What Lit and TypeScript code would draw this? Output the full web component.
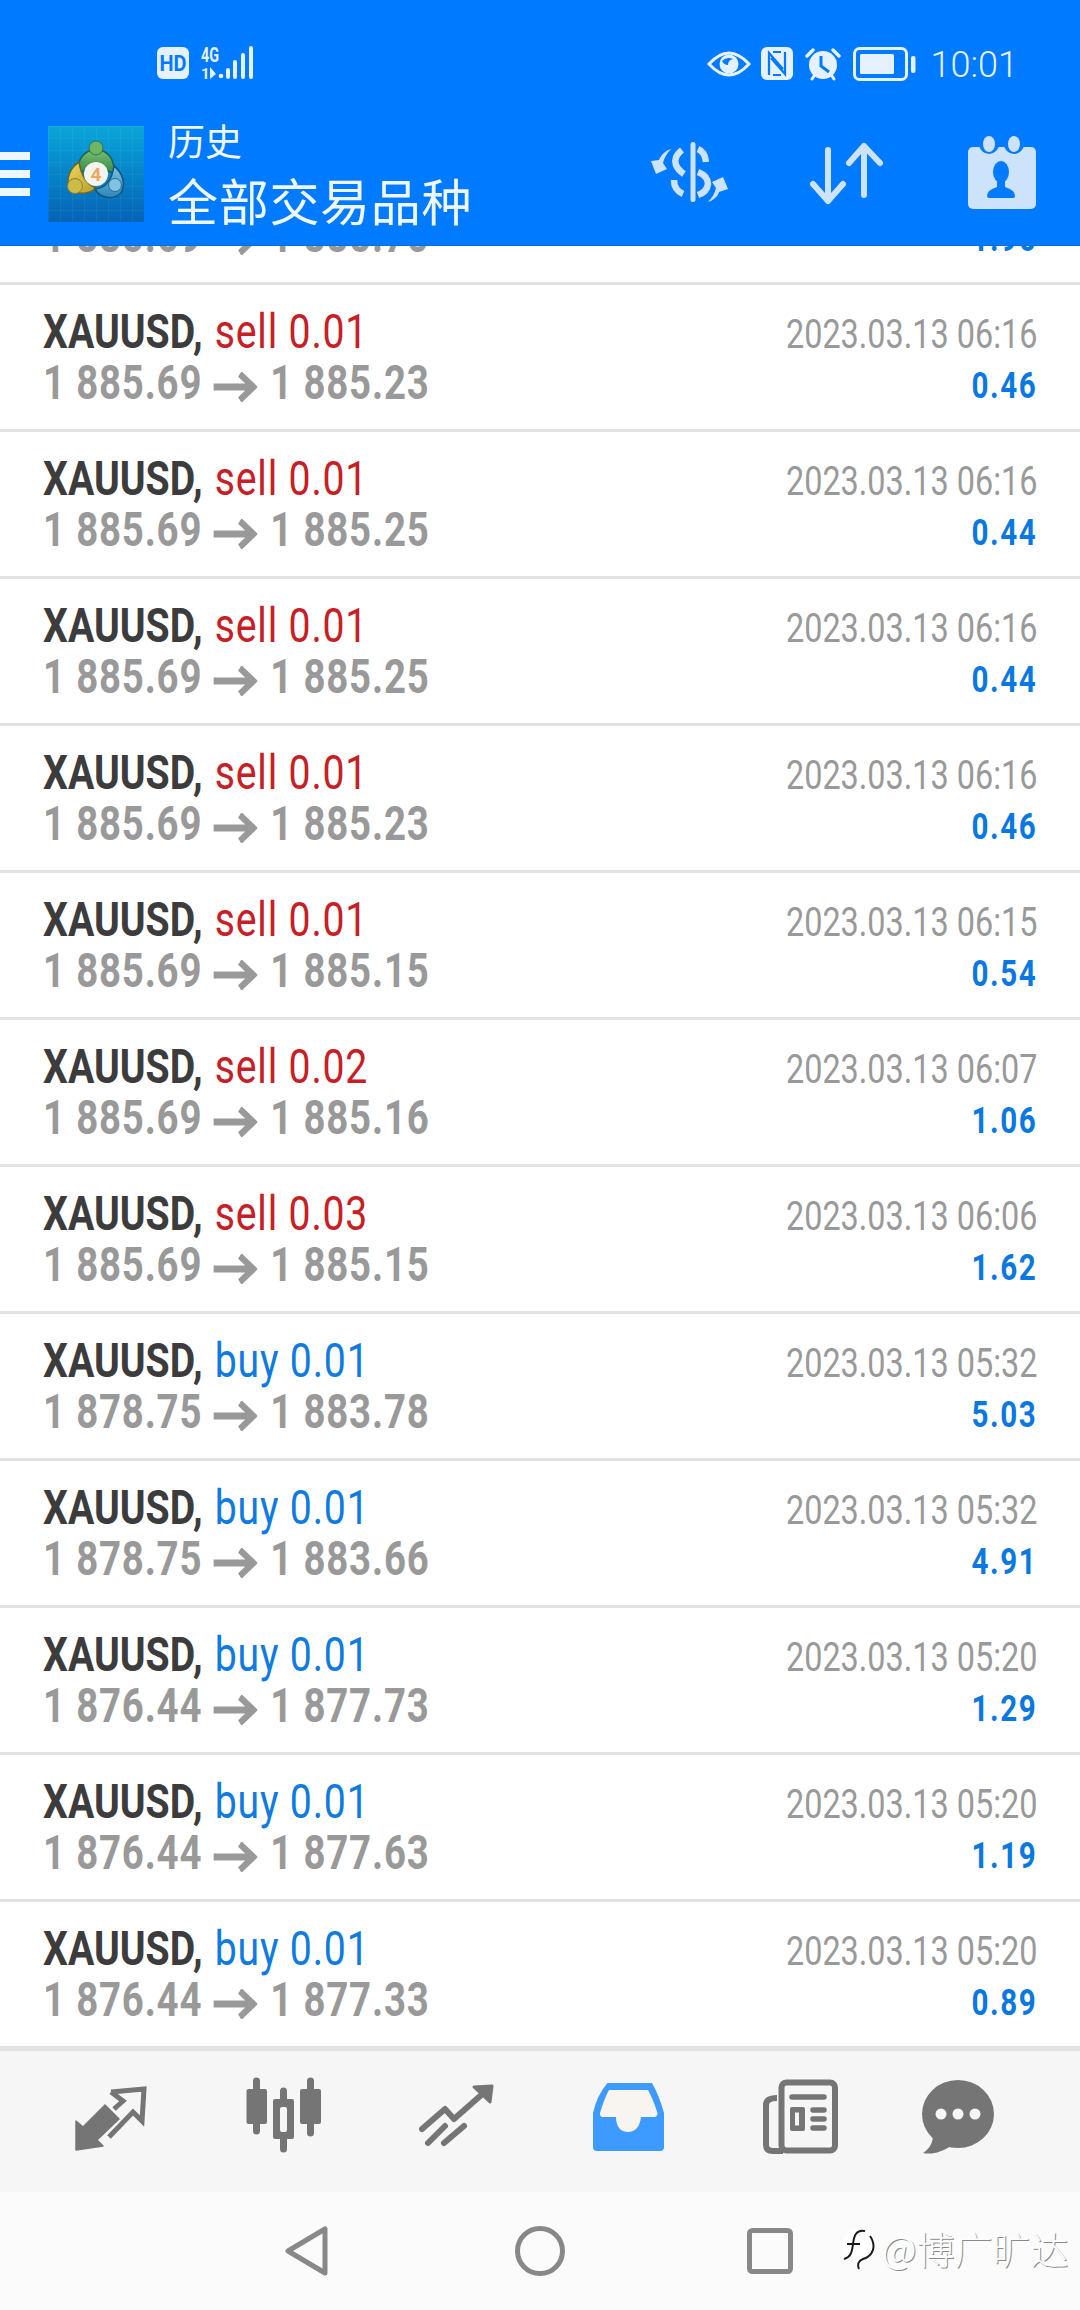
import { LitElement, html, css } from 'lit';
import { customElement } from 'lit/decorators.js';

interface Trade {
  side: 'sell' | 'buy';
  lots: string;
  from: string;
  to: string;
  time: string;
  profit: string;
}

const trades: Trade[] = [
  { side: 'sell', lots: '0.01', from: '1 885.69', to: '1 885.70', time: '2023.03.13 06:16', profit: '1.96' },
  { side: 'sell', lots: '0.01', from: '1 885.69', to: '1 885.23', time: '2023.03.13 06:16', profit: '0.46' },
  { side: 'sell', lots: '0.01', from: '1 885.69', to: '1 885.25', time: '2023.03.13 06:16', profit: '0.44' },
  { side: 'sell', lots: '0.01', from: '1 885.69', to: '1 885.25', time: '2023.03.13 06:16', profit: '0.44' },
  { side: 'sell', lots: '0.01', from: '1 885.69', to: '1 885.23', time: '2023.03.13 06:16', profit: '0.46' },
  { side: 'sell', lots: '0.01', from: '1 885.69', to: '1 885.15', time: '2023.03.13 06:15', profit: '0.54' },
  { side: 'sell', lots: '0.02', from: '1 885.69', to: '1 885.16', time: '2023.03.13 06:07', profit: '1.06' },
  { side: 'sell', lots: '0.03', from: '1 885.69', to: '1 885.15', time: '2023.03.13 06:06', profit: '1.62' },
  { side: 'buy', lots: '0.01', from: '1 878.75', to: '1 883.78', time: '2023.03.13 05:32', profit: '5.03' },
  { side: 'buy', lots: '0.01', from: '1 878.75', to: '1 883.66', time: '2023.03.13 05:32', profit: '4.91' },
  { side: 'buy', lots: '0.01', from: '1 876.44', to: '1 877.73', time: '2023.03.13 05:20', profit: '1.29' },
  { side: 'buy', lots: '0.01', from: '1 876.44', to: '1 877.63', time: '2023.03.13 05:20', profit: '1.19' },
  { side: 'buy', lots: '0.01', from: '1 876.44', to: '1 877.33', time: '2023.03.13 05:20', profit: '0.89' },
];

const ink = '#e6f1ff';
const blue = '#007aff';
const tool = '#cde3fb';
const gray = '#757575';

const hdIcon = html`<svg width="32" height="32" viewBox="0 0 32 32">
  <rect x="0" y="0" width="32" height="32" rx="6" fill=${ink}></rect>
  <text x="16" y="24" text-anchor="middle" font-family="Roboto" font-weight="700" font-size="22" textLength="27" lengthAdjust="spacingAndGlyphs" fill=${blue}>HD</text>
</svg>`;

const signalIcon = html`<svg width="54" height="36" viewBox="0 0 54 36">
  <text x="0" y="17" font-family="Roboto" font-weight="700" font-size="21" textLength="18" lengthAdjust="spacingAndGlyphs" fill=${ink}>4G</text>
  <text x="0" y="34" font-family="Roboto" font-weight="700" font-size="15" fill=${ink}>1</text>
  <path d="M9 22 L9 34 L15 29 Z" fill=${ink}></path>
  <circle cx="20" cy="31" r="2.3" fill=${ink}></circle>
  <rect x="25" y="23" width="4" height="11" rx="2" fill=${ink}></rect>
  <rect x="32" y="15" width="4" height="19" rx="2" fill=${ink}></rect>
  <rect x="40" y="8" width="4" height="26" rx="2" fill=${ink}></rect>
  <rect x="48" y="1" width="4" height="33" rx="2" fill=${ink}></rect>
</svg>`;

const eyeIcon = html`<svg class="eye" width="44" height="28" viewBox="0 0 44 28">
  <path d="M2 14 Q22 -8 42 14 Q22 36 2 14 Z" fill="none" stroke=${ink} stroke-width="3"></path>
  <circle cx="22" cy="14" r="9.5" fill=${ink}></circle>
  <path d="M15 11 Q20 6 26 9 Q21 10 21 15 Q17 15 15 11 Z" fill=${blue}></path>
</svg>`;

const nfcIcon = html`<svg width="32" height="33" viewBox="0 0 32 33">
  <rect width="32" height="33" rx="6" fill=${ink}></rect>
  <path d="M8 28 V6 L22 22 M12 5 H20 M24 5 V27 L10 11 M12 28 H20" fill="none" stroke=${blue} stroke-width="2.2"></path>
</svg>`;

const alarmIcon = html`<svg width="36" height="34" viewBox="0 0 36 34">
  <circle cx="18" cy="18" r="14" fill=${ink}></circle>
  <path d="M2 9 L8 3 M34 9 L28 3" stroke=${ink} stroke-width="3.4" stroke-linecap="round"></path>
  <path d="M7 32 L9 29 M29 32 L27 29" stroke=${ink} stroke-width="3" stroke-linecap="round"></path>
  <path d="M16 9 V19 L24 25" fill="none" stroke=${blue} stroke-width="3"></path>
</svg>`;

const batteryIcon = html`<svg width="63" height="34" viewBox="0 0 63 34">
  <rect x="1.5" y="1.5" width="52" height="31" rx="5" fill="none" stroke=${ink} stroke-width="3"></rect>
  <rect x="7" y="7" width="34" height="20" rx="1.5" fill=${ink}></rect>
  <rect x="58" y="9" width="4.5" height="17" rx="2" fill=${ink}></rect>
</svg>`;

const logo = html`<svg class="logo" width="96" height="96" viewBox="0 0 96 96">
  <defs>
    <linearGradient id="sky" x1="0" y1="0" x2="0" y2="1">
      <stop offset="0" stop-color="#0aa6d8"></stop>
      <stop offset="0.55" stop-color="#0580c8"></stop>
      <stop offset="1" stop-color="#0662b4"></stop>
    </linearGradient>
    <pattern id="mesh" width="12" height="12" patternUnits="userSpaceOnUse">
      <path d="M12 0 H0 V12" fill="none" stroke="#ffffff" stroke-opacity="0.09"></path>
    </pattern>
    <linearGradient id="lobeG" x1="0" y1="0" x2="0" y2="1">
      <stop offset="0" stop-color="#7cc06c"></stop>
      <stop offset="1" stop-color="#2f8650"></stop>
    </linearGradient>
    <linearGradient id="lobeY" x1="0" y1="0" x2="1" y2="1">
      <stop offset="0" stop-color="#efd75c"></stop>
      <stop offset="1" stop-color="#b79c2c"></stop>
    </linearGradient>
    <linearGradient id="lobeB" x1="0" y1="0" x2="0" y2="1">
      <stop offset="0" stop-color="#7cc3e6"></stop>
      <stop offset="1" stop-color="#2e86b8"></stop>
    </linearGradient>
  </defs>
  <rect width="96" height="96" fill="url(#sky)"></rect>
  <rect width="96" height="96" fill="url(#mesh)"></rect>
  <path d="M48 24 C60 24 67 33 66 48 C58 42 38 42 30 48 C29 33 36 24 48 24 Z" fill="url(#lobeG)" stroke="#1d5f5a" stroke-width="1.6"></path>
  <circle cx="48" cy="22" r="7" fill="#6fb565" stroke="#2c7550" stroke-width="1"></circle>
  <path d="M31 36 C22 42 18 52 21 62 C30 70 42 68 48 62 C38 58 33 48 31 36 Z" fill="url(#lobeY)" stroke="#5f6b30" stroke-width="1.6"></path>
  <circle cx="27" cy="60" r="7.500" fill="#cdbb45" stroke="#8a8232" stroke-width="1"></circle>
  <path d="M66 40 C75 47 78 58 73 67 C64 75 52 72 47 63 C58 62 64 54 66 40 Z" fill="url(#lobeB)" stroke="#14587e" stroke-width="1.6"></path>
  <circle cx="67" cy="59" r="6.500" fill="#80c2e0" stroke="#256f98" stroke-width="1"></circle>
  <circle cx="48" cy="48" r="12" fill="#f4f4ee"></circle>
  <text x="48" y="55" text-anchor="middle" font-family="Roboto" font-weight="700" font-size="19" fill="#efa95f">4</text>
</svg>`;

const dollarIcon = html`<svg width="90" height="80" viewBox="0 4 90 80">
  <rect x="50.5" y="12" width="5" height="60" rx="2.5" fill=${tool}></rect>
  <g fill="none" stroke=${tool} stroke-width="6.500">
    <path d="M42 20 Q33 27 36 35 Q38 40 44 44"></path>
    <path d="M58 19 Q65 22 66 32"></path>
    <path d="M34 50 Q34 60 43 64"></path>
    <path d="M58 42 Q68 46 68 54 Q67 62 58 65"></path>
  </g>
  <path d="M31 19 C25 21 21 25 19 30 L11 31 L16 44 L27 39 L23 33 C24 28 27 23 31 19 Z" fill=${tool}></path>
  <path d="M68 72 C74 70 78 66 79 62 L88 59 L83 47 L72 52 L76 58 C75 63 72 68 68 72 Z" fill=${tool}></path>
</svg>`;

const sortIcon = html`<svg width="80" height="70" viewBox="0 -1 80 70">
  <g fill="none" stroke=${tool} stroke-width="6" stroke-linecap="round" stroke-linejoin="round">
    <path d="M22 10 V60 M7 44 L22 61 L37 44"></path>
    <path d="M58 6 V55 M43 23 L58 6 L74 23"></path>
  </g>
</svg>`;

const calendarIcon = html`<svg width="80" height="80" viewBox="0 0 80 80">
  <rect x="6" y="13" width="68" height="62" rx="5" fill=${tool}></rect>
  <circle cx="27" cy="10" r="10" fill=${blue}></circle>
  <circle cx="52" cy="10" r="10" fill=${blue}></circle>
  <ellipse cx="27" cy="10" rx="6" ry="8" fill=${tool}></ellipse>
  <ellipse cx="52" cy="10" rx="6" ry="8" fill=${tool}></ellipse>
  <ellipse cx="39" cy="38" rx="8" ry="11" fill=${blue}></ellipse>
  <path d="M25 62 Q25 56 35 53 H43 Q53 56 53 62 Q53 64 51 64 H27 Q25 64 25 62 Z" fill=${blue}></path>
  <rect x="35" y="44" width="8" height="11" fill=${blue}></rect>
</svg>`;

const tradeIcon = html`<svg width="90" height="90" viewBox="-5 -8 90 90">
  <path d="M4 44 L11 50 L33 28 L47 42 L25 63 L31 69 L4 73 Z" fill=${gray} stroke=${gray} stroke-width="1.5" stroke-linejoin="round"></path>
  <path d="M39 15 L72 12 L70 44 L61 35 L37 60 M39 15 L51 24 L42 32" fill="none" stroke=${gray} stroke-width="5"></path>
</svg>`;

const candleIcon = html`<svg width="90" height="90" viewBox="0 0 90 90">
  <g stroke=${gray} stroke-width="7" stroke-linecap="round">
    <path d="M17.5 12 V62 M44.5 22 V80 M71.5 12 V64"></path>
  </g>
  <rect x="7.5" y="20" width="20.5" height="35" rx="2" fill=${gray}></rect>
  <rect x="34" y="30" width="21" height="40" rx="2" fill=${gray}></rect>
  <rect x="61" y="20" width="21" height="35" rx="2" fill=${gray}></rect>
  <rect x="41" y="38" width="7" height="25" rx="2" fill="#f6f6f6"></rect>
</svg>`;

const chartIcon = html`<svg width="90" height="90" viewBox="0 0 90 90">
  <g fill="none" stroke=${gray} stroke-width="6" stroke-linecap="round" stroke-linejoin="round">
    <path d="M11 60 L34 40 L43 50 L76 21"></path>
    <path d="M34 57 L17 74 M53 57 L33 74"></path>
  </g>
  <path d="M63 18 L81 17 L79 33 Z" fill=${gray} stroke=${gray} stroke-width="3" stroke-linejoin="round"></path>
</svg>`;

const trayIcon = html`<svg width="90" height="90" viewBox="0 0 90 90">
  <path d="M24.5 14 H69 Q76 26 81 44 V78 Q81 82 77 82 H14 Q10 82 10 78 V44 Q14 26 24.5 14 Z" fill="#3d9bff"></path>
  <path d="M26 21 H65 Q70 30 74.5 44 Q74.5 48 71 48 H58 C57 58 52 63 45 63 C38 63 33 58 33 48 H20 Q16.500 48 17 44 Q21 30 26 21 Z" fill="#f8f5f0"></path>
</svg>`;

const newsIcon = html`<svg width="90" height="90" viewBox="0 0 90 90">
  <rect x="26.500" y="13.500" width="53.500" height="68" rx="5" fill="none" stroke=${gray} stroke-width="6"></rect>
  <path d="M22 29 Q11 29 11 36 V76 Q11 82 18 82 H28" fill="none" stroke=${gray} stroke-width="6"></path>
  <g stroke=${gray} stroke-width="5.500" stroke-linecap="round">
    <path d="M37 28 H69 M58 41 H69 M58 50 H69 M58 59 H69"></path>
  </g>
  <rect x="35" y="38" width="15" height="24" rx="2" fill=${gray}></rect>
  <rect x="40" y="43.500" width="4" height="13" fill="#f6f6f6"></rect>
</svg>`;

const chatIcon = html`<svg class="chat" width="90" height="90" viewBox="0 0 90 90">
  <ellipse cx="31" cy="45" rx="36" ry="34" fill=${gray}></ellipse>
  <path d="M6 62 C7 74 2 80 -4 84 C6 86 14 83 24 77 Z" fill=${gray}></path>
  <circle cx="14" cy="45" r="5.500" fill="#f6f6f6"></circle>
  <circle cx="31" cy="45" r="5.500" fill="#f6f6f6"></circle>
  <circle cx="48" cy="45" r="5.500" fill="#f6f6f6"></circle>
</svg>`;

const backIcon = html`<svg width="44" height="50" viewBox="0 0 44 50">
  <path d="M40 3 V47 L3 25 Z" fill="none" stroke="#888888" stroke-width="5" stroke-linejoin="round"></path>
</svg>`;

const homeIcon = html`<svg width="50" height="50" viewBox="0 0 50 50">
  <circle cx="25" cy="25" r="22.500" fill="none" stroke="#888888" stroke-width="5"></circle>
</svg>`;

const recentIcon = html`<svg width="46" height="46" viewBox="0 0 46 46">
  <rect x="2.500" y="2.500" width="41" height="41" rx="3" fill="none" stroke="#888888" stroke-width="5"></rect>
</svg>`;

const markIcon = html`<svg width="38" height="44" viewBox="0 0 38 44">
  <circle cx="18" cy="19" r="17" fill="#ffffff"></circle>
  <path d="M24 5 C15 3 13 10 12 18 C11 26 10 31 3 33 M6 18 H19 M29 10 C36 20 32 30 22 33 C17 35 16 39 18 43" fill="none" stroke="#1a1a1a" stroke-width="2"></path>
</svg>`;

@customElement('app-root')
export class AppRoot extends LitElement {
  static styles = css`
    :host {
      display: flex;
      flex-direction: column;
      width: 1080px;
      height: 2310px;
      overflow: hidden;
      background: #ffffff;
      font-family: Roboto, 'Noto Sans CJK SC', sans-serif;
    }

    .head {
      flex: none;
      height: 245px;
      background: #007aff;
      border-bottom: 1px solid #0a6fd6;
    }

    .status {
      display: flex;
      align-items: flex-start;
      height: 84px;
      box-sizing: border-box;
      padding: 45px 62px 0 157px;
    }

    .status .left,
    .status .right {
      display: flex;
      align-items: center;
    }

    .status .left {
      gap: 12px;
    }

    .status .right {
      margin-left: auto;
      gap: 12px;
    }

    .eye {
      margin-right: -2px;
    }

    .clock {
      margin-left: 3px;
      padding-top: 3px;
      font-size: 36px;
      font-weight: 300;
      line-height: 34px;
      color: #e6f1ff;
    }

    .bar {
      display: flex;
      align-items: center;
      height: 144px;
      margin-top: 18px;
      padding-right: 38px;
    }

    .burger {
      display: flex;
      flex-direction: column;
      gap: 10px;
      width: 30px;
      margin-right: 18px;
    }

    .burger i {
      display: block;
      height: 8px;
      background: #eef6ff;
    }

    .titles {
      flex: 1;
      margin-left: 24px;
      padding-bottom: 3px;
      color: #eef6ff;
      font-family: 'Noto Sans CJK SC', sans-serif;
    }

    .titles .small {
      margin-bottom: 3px;
      font-size: 37px;
      line-height: 50px;
    }

    .titles .big {
      font-size: 50px;
      letter-spacing: 0.7px;
      line-height: 62px;
    }

    .tools {
      display: flex;
      align-items: center;
      gap: 76px;
    }

    .list {
      flex: 1;
      min-height: 0;
      overflow: hidden;
    }

    .rows {
      margin-top: -108px;
    }

    .row {
      display: flex;
      justify-content: space-between;
      height: 147px;
      box-sizing: border-box;
      padding: 21px 43px 0 43px;
      border-bottom: 3px solid #e3e3e3;
    }

    .col {
      display: flex;
      flex-direction: column;
    }

    .col.r {
      align-items: flex-end;
      padding-top: 3px;
    }

    .cond {
      display: block;
      white-space: nowrap;
      line-height: 51px;
      transform: scaleX(0.8);
      transform-origin: left center;
    }

    .col.r .cond {
      transform-origin: right center;
    }

    .title {
      font-size: 49px;
    }

    .sym {
      margin-right: 3px;
      font-weight: 700;
      color: #3c3c3c;
    }

    .sell {
      letter-spacing: 1px;
      color: #c62026;
    }

    .buy {
      letter-spacing: 1px;
      color: #0f7ae0;
    }

    .prices {
      font-size: 48px;
      font-weight: 700;
      letter-spacing: 1px;
      color: #999999;
    }

    .prices svg {
      margin: 0 16px 0 14px;
      vertical-align: -3px;
    }

    .cond.time {
      font-size: 40px;
      color: #999999;
      transform: scaleX(0.81);
    }

    .profit {
      font-size: 37px;
      font-weight: 700;
      letter-spacing: 2px;
      color: #0a78e0;
    }

    .tabs {
      flex: none;
      display: flex;
      align-items: center;
      height: 143px;
      box-sizing: border-box;
      padding: 0 0 16px 26px;
      background: #f6f6f6;
      border-top: 2px solid #e3e3e3;
    }

    .tabs .tab {
      display: flex;
      justify-content: center;
      width: 172px;
    }

    .tabs svg {
      overflow: visible;
    }

    .nav {
      position: relative;
      flex: none;
      display: flex;
      align-items: center;
      height: 118px;
      padding-left: 285px;
      background: #fbfbfb;
    }

    .nav .home {
      margin: 0 182px 0 186px;
      display: flex;
    }

    .nav .back,
    .nav .recent {
      display: flex;
    }

    .mark {
      position: absolute;
      left: 841px;
      top: 34px;
      display: flex;
      align-items: center;
      gap: 3px;
      font-family: 'Noto Sans CJK SC', sans-serif;
      font-size: 38px;
      font-weight: 300;
      line-height: 44px;
      color: #fdfdfd;
      text-shadow: 1px 1px 0 #8a8a8a;
    }
  `;

  renderRow(t: Trade) {
    return html`
      <div class="row">
        <div class="col">
          <span class="cond title"><span class="sym">XAUUSD,</span> <span class=${t.side}>${t.side} ${t.lots}</span></span>
          <span class="cond prices">${t.from}<svg width="55" height="30" viewBox="0 0 55 30">
              <path d="M0 15 H50 M33 2 L50 15 L33 28" fill="none" stroke="#999999" stroke-width="7"></path>
            </svg>${t.to}</span>
        </div>
        <div class="col r">
          <span class="cond time">${t.time}</span>
          <span class="cond profit">${t.profit}</span>
        </div>
      </div>
    `;
  }

  render() {
    return html`
      <div class="head">
        <div class="status">
          <div class="left">${hdIcon}${signalIcon}</div>
          <div class="right">${eyeIcon}${nfcIcon}${alarmIcon}${batteryIcon}<span class="clock">10:01</span></div>
        </div>
        <div class="bar">
          <div class="burger"><i></i><i></i><i></i></div>
          ${logo}
          <div class="titles">
            <div class="small">历史</div>
            <div class="big">全部交易品种</div>
          </div>
          <div class="tools">${dollarIcon}${sortIcon}${calendarIcon}</div>
        </div>
      </div>
      <div class="list">
        <div class="rows">${trades.map((t) => this.renderRow(t))}</div>
      </div>
      <div class="tabs">
        <div class="tab">${tradeIcon}</div>
        <div class="tab">${candleIcon}</div>
        <div class="tab">${chartIcon}</div>
        <div class="tab">${trayIcon}</div>
        <div class="tab">${newsIcon}</div>
        <div class="tab">${chatIcon}</div>
      </div>
      <div class="nav">
        <span class="back">${backIcon}</span>
        <span class="home">${homeIcon}</span>
        <span class="recent">${recentIcon}</span>
        <div class="mark">${markIcon}<span>@博广旷达</span></div>
      </div>
    `;
  }
}
